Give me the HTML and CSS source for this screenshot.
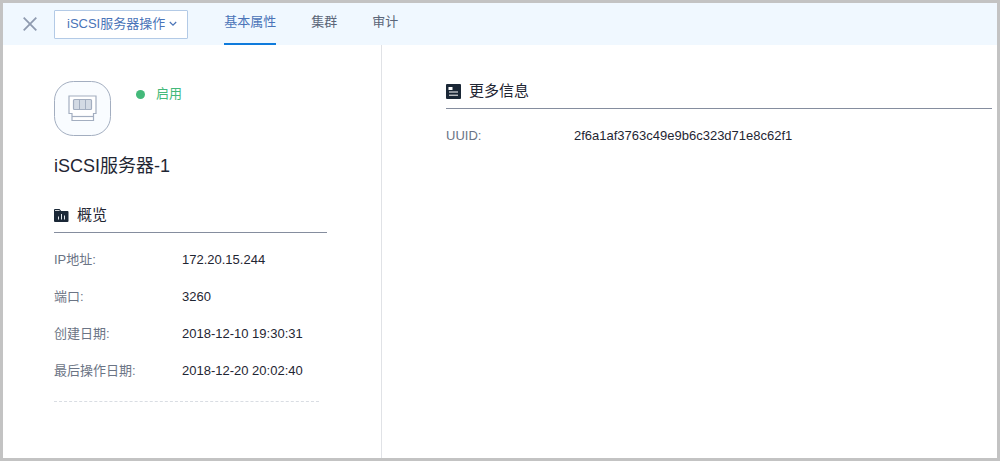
FILE: index.html
```
<!DOCTYPE html>
<html lang="zh-CN">
<head>
    <meta charset="UTF-8">
    <meta name="viewport" content="width=device-width, initial-scale=1.0">
    <title>iSCSI服务器-1</title>
    <link rel="stylesheet" href="styles.css">
</head>
<body>
    <header class="topbar">
        <button class="close" type="button" aria-label="关闭">
            <svg width="14" height="14" viewBox="0 0 14 14" fill="none" stroke="#8f9bb0" stroke-width="1.8">
                <path d="M0.7 0.7L13.3 13.3M13.3 0.7L0.7 13.3"/>
            </svg>
        </button>
        <button class="actions" type="button">
            iSCSI服务器操作
            <svg width="8" height="6" viewBox="0 0 8 6" fill="none" stroke="#4a74b8" stroke-width="1.2">
                <path d="M0.8 1L4 4.2L7.2 1"/>
            </svg>
        </button>
        <nav class="tabs">
            <a class="tab active" href="#basic">基本属性</a>
            <a class="tab" href="#cluster">集群</a>
            <a class="tab" href="#audit">审计</a>
        </nav>
    </header>
    <main class="content">
        <aside class="side">
            <div class="summary">
                <svg class="server-icon" width="57" height="55" viewBox="0 0 57 55" fill="none" stroke="#a3aec0">
                    <rect x="0.5" y="0.5" width="56" height="54" rx="19" fill="#f9fcff"/>
                    <path d="M15 15H42V32.5H39.5V39.5H18V32.5H15Z" fill="#fff" stroke-width="1.2"/>
                    <path d="M18 35.5H39.5" stroke-width="1.2"/>
                    <rect x="19.5" y="18.5" width="18" height="10" rx="1" fill="#d3dae4" stroke-width="1.2"/>
                    <path d="M25.5 18.5V28.5M31.5 18.5V28.5"/>
                </svg>
                <span class="status">启用</span>
            </div>
            <h1 class="name">iSCSI服务器-1</h1>
            <h2 class="section-title">
                <svg width="15" height="15" viewBox="0 0 15 15">
                    <path d="M0 2Q0 1 1 1H5.5L7.2 3H13.5Q14.5 3 14.5 4V13Q14.5 14 13.5 14H1Q0 14 0 13Z" fill="#1a2736"/>
                    <path d="M1 2.5H5.6" stroke="#fff" stroke-width="0.8"/>
                    <path d="M4.5 8.5V11.5M7.5 6V11.5M10.5 7.5V11.5" stroke="#dfe4ea" stroke-width="1"/>
                </svg>
                概览
            </h2>
            <dl class="info">
                <dt>IP地址:</dt>
                <dd>172.20.15.244</dd>
                <dt>端口:</dt>
                <dd>3260</dd>
                <dt>创建日期:</dt>
                <dd>2018-12-10 19:30:31</dd>
                <dt>最后操作日期:</dt>
                <dd>2018-12-20 20:02:40</dd>
            </dl>
            <hr class="divider">
        </aside>
        <section class="detail">
            <h2 class="section-title">
                <svg width="15" height="15" viewBox="0 0 15 15">
                    <rect width="15" height="15" rx="1" fill="#1a2736"/>
                    <rect x="2.5" y="3" width="4" height="3" fill="#fff"/>
                    <path d="M3 8H12M3 11.2H12" stroke="#fff" stroke-width="1"/>
                </svg>
                更多信息
            </h2>
            <dl class="info">
                <dt>UUID:</dt>
                <dd>2f6a1af3763c49e9b6c323d71e8c62f1</dd>
            </dl>
        </section>
    </main>
</body>
</html>
```
FILE: styles.css
```
* {
    box-sizing: border-box;
}
body {
    margin: 0;
    min-height: 100vh;
    border: 3px solid #c3c3c3;
    background-color: #fff;
    font-family: "Liberation Sans", "Noto Sans CJK SC", sans-serif;
    font-size: 13px;
    line-height: 20px;
    color: #1f2633;
    display: flex;
    flex-direction: column;
}
h1, h2, dl, dd {
    margin: 0;
    font-weight: normal;
}
button {
    font: inherit;
    cursor: pointer;
}
.topbar {
    display: flex;
    align-items: center;
    height: 42px;
    padding-left: 20px;
    background-color: #f0f8ff;
}
.close {
    display: flex;
    padding: 0;
    border: none;
    background: none;
    margin-right: 17px;
}
.actions {
    display: flex;
    align-items: center;
    gap: 4px;
    height: 29px;
    padding: 0 10px 0 12px;
    border: 1px solid #b3cae6;
    border-radius: 1px;
    background-color: #fff;
    color: #4a74b8;
}
.tabs {
    display: flex;
    align-self: stretch;
    gap: 35px;
    margin-left: 36px;
}
.tab {
    padding-top: 9px;
    border-bottom: 2px solid transparent;
    color: #5b6678;
    text-decoration: none;
}
.tab.active {
    color: #4a74b8;
    border-bottom-color: #0f7bdc;
}
.content {
    flex: 1;
    display: flex;
}
.side {
    flex: 0 0 379px;
    padding: 36px 54px 0 51px;
    border-right: 1px solid #e0e2e6;
}
.summary {
    display: flex;
    align-items: flex-start;
    gap: 25px;
}
.server-icon {
    display: block;
}
.status {
    display: flex;
    align-items: center;
    gap: 11px;
    margin-top: 3px;
    color: #43b97a;
}
.status::before {
    content: "";
    width: 9px;
    height: 9px;
    border-radius: 50%;
    background-color: #43b97a;
}
.name {
    margin-top: 18px;
    font-size: 18px;
    line-height: 24px;
}
.section-title {
    display: flex;
    align-items: center;
    gap: 8px;
    padding-bottom: 7px;
    border-bottom: 1px solid #858d9e;
    font-size: 15px;
    line-height: 20px;
}
.side .section-title {
    margin-top: 27px;
}
.info {
    display: grid;
    grid-template-columns: 128px 1fr;
    row-gap: 17px;
    margin-top: 17px;
}
.info dt {
    color: #6b7485;
}
.divider {
    margin: 20px 8px 0 0;
    border: none;
    border-top: 1px dashed #d9dde3;
}
.detail {
    flex: 1;
    padding: 36px 5px 0 64px;
}
```
